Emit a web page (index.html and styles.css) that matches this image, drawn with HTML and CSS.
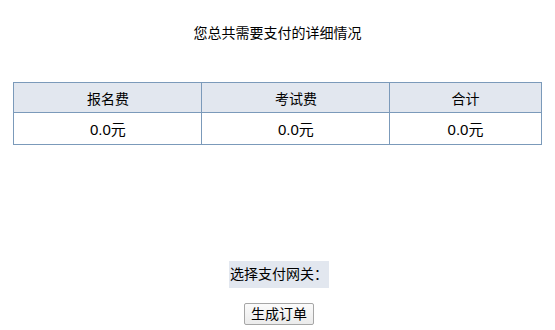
FILE: index.html
```html
<!DOCTYPE html>
<html lang="zh-CN">
<head>
<meta charset="utf-8">
<title>支付详情</title>
<link rel="stylesheet" href="styles.css">
</head>
<body>
<div class="page">
  <div class="title">您总共需要支付的详细情况</div>
  <table class="fees">
    <thead>
      <tr>
        <th class="c1">报名费</th>
        <th class="c2">考试费</th>
        <th>合计</th>
      </tr>
    </thead>
    <tbody>
      <tr>
        <td>0.0元</td>
        <td>0.0元</td>
        <td>0.0元</td>
      </tr>
    </tbody>
  </table>
  <div class="pay">
    <span class="gateway">选择支付网关：</span>
    <button class="submit" type="button">生成订单</button>
  </div>
</div>
</body>
</html>
```

FILE: styles.css
```css
html, body {
  background: #ffffff;
}
body {
  margin: 8px;
  font-family: "Liberation Sans", "Noto Sans CJK SC", sans-serif;
  font-size: 14px;
  color: #000000;
}
.page {
  display: flex;
  flex-direction: column;
}
.title {
  margin-top: 15px;
  height: 20px;
  line-height: 20px;
  text-align: center;
  font-size: 14px;
}
.fees {
  width: 98%;
  margin: 39px auto 0;
  border-collapse: collapse;
  border: 1px solid #7b9aba;
}
.fees th,
.fees td {
  border: 1px solid #7b9aba;
  text-align: center;
  padding: 0;
  font-weight: normal;
}
.fees th {
  background: #e2e7ef;
  height: 29px;
  font-size: 14px;
}
.fees td {
  height: 31px;
  font-size: 15px;
}
.fees .c1,
.fees .c2 {
  width: 187px;
}
.pay {
  margin-top: 116px;
  display: flex;
  flex-direction: column;
  align-items: center;
  gap: 15px;
  padding-left: 3px;
}
.gateway {
  display: inline-block;
  background: #e2e7ef;
  line-height: 27px;
  height: 27px;
  padding: 0 1px;
  font-size: 14px;
}
.submit {
  width: 70px;
  height: 22px;
  padding: 0;
  font-family: "Liberation Sans", "Noto Sans CJK SC", sans-serif;
  font-size: 14px;
  line-height: 20px;
  color: #000000;
  border: 1px solid #a6a6a6;
  border-radius: 2px;
  background: linear-gradient(#fbfbfb, #ebebeb);
}
```
